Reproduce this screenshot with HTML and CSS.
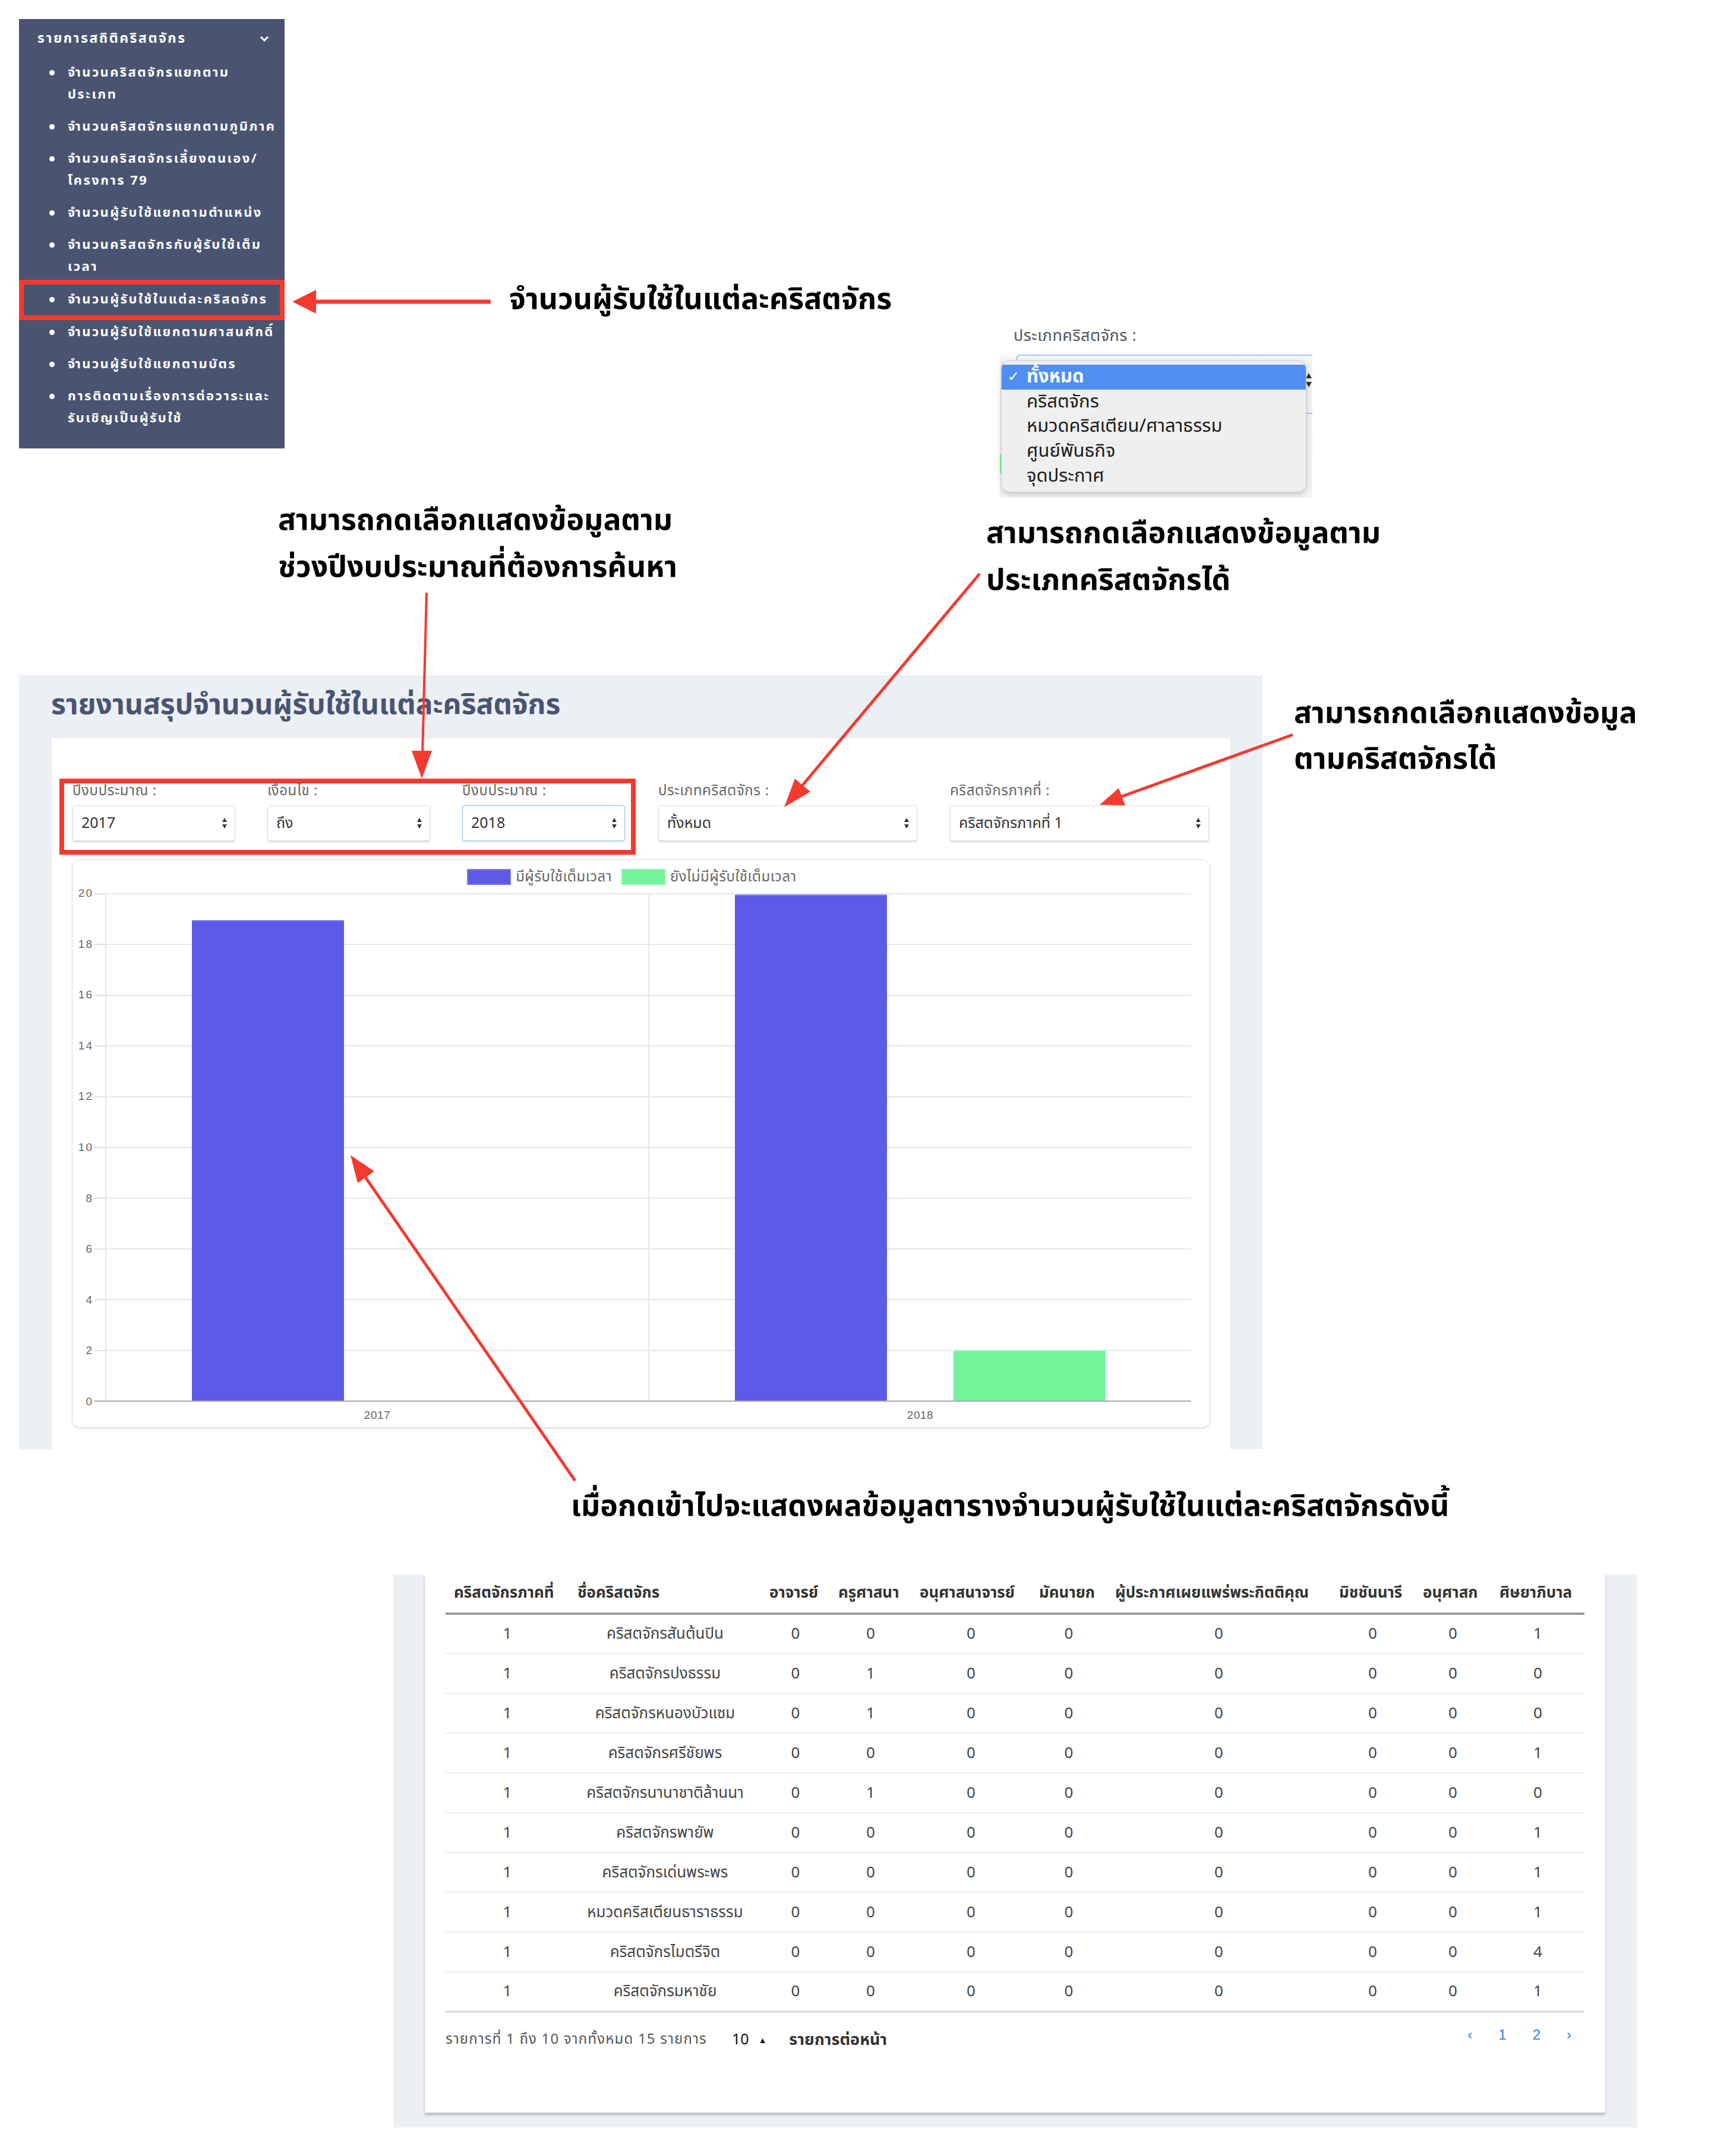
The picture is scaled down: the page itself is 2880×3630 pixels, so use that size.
FILE: index.html
```html
<!DOCTYPE html>
<html lang="th">
<head>
<meta charset="utf-8">
<title>รายงานสรุปจำนวนผู้รับใช้ในแต่ละคริสตจักร</title>
<link rel="stylesheet" href="styles.css">
</head>
<body>
<div class="page">

  <section class="row-top">
    <nav class="sidebar">
      <div class="side-title"><span>รายการสถิติคริสตจักร</span>
        <svg class="chev" width="16" height="10" viewBox="0 0 16 10"><path d="M2 2 L8 8 L14 2" fill="none" stroke="#fff" stroke-width="3"/></svg>
      </div>
      <ul class="side-list">
        <li>จำนวนคริสตจักรแยกตาม<br>ประเภท</li>
        <li>จำนวนคริสตจักรแยกตามภูมิภาค</li>
        <li>จำนวนคริสตจักรเลี้ยงตนเอง/<br>โครงการ 79</li>
        <li>จำนวนผู้รับใช้แยกตามตำแหน่ง</li>
        <li>จำนวนคริสตจักรกับผู้รับใช้เต็ม<br>เวลา</li>
        <li class="active">จำนวนผู้รับใช้ในแต่ละคริสตจักร</li>
        <li>จำนวนผู้รับใช้แยกตามศาสนศักดิ์</li>
        <li>จำนวนผู้รับใช้แยกตามบัตร</li>
        <li>การติดตามเรื่องการต่อวาระและ<br>รับเชิญเป็นผู้รับใช้</li>
      </ul>
    </nav>
    <p class="callout callout-side">จำนวนผู้รับใช้ในแต่ละคริสตจักร</p>
    <div class="dropshot">
      <div class="drop-label">ประเภทคริสตจักร :</div>
      <div class="ghost-select">
        <svg class="ghost-arrows" width="12" height="30" viewBox="0 0 12 30"><path d="M1 12 L6 3 L11 12 Z M1 18 L6 27 L11 18 Z" fill="#333"/></svg>
      </div>
      <div class="ghost-green"></div>
      <ul class="drop-menu">
        <li class="sel"><span class="tick">✓</span>ทั้งหมด</li>
        <li>คริสตจักร</li>
        <li>หมวดคริสเตียน/ศาลาธรรม</li>
        <li>ศูนย์พันธกิจ</li>
        <li>จุดประกาศ</li>
      </ul>
    </div>
  </section>

  <section class="row-notes">
    <p class="callout note-year">สามารถกดเลือกแสดงข้อมูลตาม<br>ช่วงปีงบประมาณที่ต้องการค้นหา</p>
    <p class="callout note-type">สามารถกดเลือกแสดงข้อมูลตาม<br>ประเภทคริสตจักรได้</p>
  </section>

  <section class="row-main">
    <div class="panel">
      <h1 class="panel-title">รายงานสรุปจำนวนผู้รับใช้ในแต่ละคริสตจักร</h1>
      <div class="card">
        <div class="filters">
          <div class="redbox">
            <div class="field f-small">
              <label>ปีงบประมาณ :</label>
              <div class="select"><span>2017</span><svg width="10" height="22" viewBox="0 0 10 22"><path d="M1 9 L5 2 L9 9 Z M1 13 L5 20 L9 13 Z" fill="#333"/></svg></div>
            </div>
            <div class="field f-small">
              <label>เงื่อนไข :</label>
              <div class="select"><span>ถึง</span><svg width="10" height="22" viewBox="0 0 10 22"><path d="M1 9 L5 2 L9 9 Z M1 13 L5 20 L9 13 Z" fill="#333"/></svg></div>
            </div>
            <div class="field f-small">
              <label>ปีงบประมาณ :</label>
              <div class="select focus"><span>2018</span><svg width="10" height="22" viewBox="0 0 10 22"><path d="M1 9 L5 2 L9 9 Z M1 13 L5 20 L9 13 Z" fill="#333"/></svg></div>
            </div>
          </div>
          <div class="field f-wide f-type">
            <label>ประเภทคริสตจักร :</label>
            <div class="select"><span>ทั้งหมด</span><svg width="10" height="22" viewBox="0 0 10 22"><path d="M1 9 L5 2 L9 9 Z M1 13 L5 20 L9 13 Z" fill="#333"/></svg></div>
          </div>
          <div class="field f-wide f-region">
            <label>คริสตจักรภาคที่ :</label>
            <div class="select"><span>คริสตจักรภาคที่ 1</span><svg width="10" height="22" viewBox="0 0 10 22"><path d="M1 9 L5 2 L9 9 Z M1 13 L5 20 L9 13 Z" fill="#333"/></svg></div>
          </div>
        </div>

        <div class="chart">
          <div class="legend">
            <span class="lg-box blue"></span><span class="lg-text">มีผู้รับใช้เต็มเวลา</span>
            <span class="lg-box green"></span><span class="lg-text">ยังไม่มีผู้รับใช้เต็มเวลา</span>
          </div>
          <div class="chart-body">
            <div class="yaxis">
              <span>20</span><span>18</span><span>16</span><span>14</span><span>12</span><span>10</span><span>8</span><span>6</span><span>4</span><span>2</span><span>0</span>
            </div>
            <div class="plot-wrap">
              <div class="plot">
                <div class="cat">
                  <div class="bar blue" style="height:95%"></div>
                  <div class="bar green" style="height:0%"></div>
                </div>
                <div class="cat">
                  <div class="bar blue" style="height:100%"></div>
                  <div class="bar green" style="height:10%"></div>
                </div>
              </div>
              <div class="xaxis">
                <span>2017</span><span>2018</span>
              </div>
            </div>
          </div>
        </div>
      </div>
    </div>
    <p class="callout note-church">สามารถกดเลือกแสดงข้อมูล<br>ตามคริสตจักรได้</p>
  </section>

  <p class="callout note-table">เมื่อกดเข้าไปจะแสดงผลข้อมูลตารางจำนวนผู้รับใช้ในแต่ละคริสตจักรดังนี้</p>

  <section class="row-table">
    <div class="tpanel">
      <div class="tcard">
        <table class="report">
          <colgroup>
            <col style="width:208px"><col style="width:323px"><col style="width:116px"><col style="width:137px"><col style="width:201px">
            <col style="width:128px"><col style="width:377px"><col style="width:141px"><col style="width:129px"><col style="width:157px">
          </colgroup>
          <thead>
            <tr>
              <th>คริสตจักรภาคที่</th><th>ชื่อคริสตจักร</th><th>อาจารย์</th><th>ครูศาสนา</th><th>อนุศาสนาจารย์</th>
              <th>มัคนายก</th><th>ผู้ประกาศเผยแพร่พระกิตติคุณ</th><th>มิชชันนารี</th><th>อนุศาสก</th><th>ศิษยาภิบาล</th>
            </tr>
          </thead>
          <tbody>
            <tr><td>1</td><td>คริสตจักรสันต้นปิน</td><td>0</td><td>0</td><td>0</td><td>0</td><td>0</td><td>0</td><td>0</td><td>1</td></tr>
            <tr><td>1</td><td>คริสตจักรปงธรรม</td><td>0</td><td>1</td><td>0</td><td>0</td><td>0</td><td>0</td><td>0</td><td>0</td></tr>
            <tr><td>1</td><td>คริสตจักรหนองบัวแซม</td><td>0</td><td>1</td><td>0</td><td>0</td><td>0</td><td>0</td><td>0</td><td>0</td></tr>
            <tr><td>1</td><td>คริสตจักรศรีชัยพร</td><td>0</td><td>0</td><td>0</td><td>0</td><td>0</td><td>0</td><td>0</td><td>1</td></tr>
            <tr><td>1</td><td>คริสตจักรนานาชาติล้านนา</td><td>0</td><td>1</td><td>0</td><td>0</td><td>0</td><td>0</td><td>0</td><td>0</td></tr>
            <tr><td>1</td><td>คริสตจักรพายัพ</td><td>0</td><td>0</td><td>0</td><td>0</td><td>0</td><td>0</td><td>0</td><td>1</td></tr>
            <tr><td>1</td><td>คริสตจักรเด่นพระพร</td><td>0</td><td>0</td><td>0</td><td>0</td><td>0</td><td>0</td><td>0</td><td>1</td></tr>
            <tr><td>1</td><td>หมวดคริสเตียนธาราธรรม</td><td>0</td><td>0</td><td>0</td><td>0</td><td>0</td><td>0</td><td>0</td><td>1</td></tr>
            <tr><td>1</td><td>คริสตจักรไมตรีจิต</td><td>0</td><td>0</td><td>0</td><td>0</td><td>0</td><td>0</td><td>0</td><td>4</td></tr>
            <tr><td>1</td><td>คริสตจักรมหาชัย</td><td>0</td><td>0</td><td>0</td><td>0</td><td>0</td><td>0</td><td>0</td><td>1</td></tr>
          </tbody>
        </table>
        <div class="tfoot">
          <div class="tinfo">
            <span class="count">รายการที่ 1 ถึง 10 จากทั้งหมด 15 รายการ</span>
            <span class="perpage">10 <small>▲</small></span>
            <span class="perlabel">รายการต่อหน้า</span>
          </div>
          <div class="pager"><span>‹</span><span>1</span><span>2</span><span>›</span></div>
        </div>
      </div>
    </div>
  </section>

  <svg class="arrows" width="2880" height="3630" viewBox="0 0 2880 3630">
    <g fill="#f43a2f" stroke="#f43a2f">
      <line x1="826" y1="508" x2="528" y2="508" stroke-width="7"/>
      <polygon points="492,508 532,488 532,528" stroke="none"/>
      <line x1="718" y1="998" x2="711" y2="1272" stroke-width="4"/>
      <polygon points="710,1311 693,1264 727,1264" stroke="none"/>
      <line x1="1649" y1="966" x2="1350" y2="1323" stroke-width="5"/>
      <polygon points="1320,1359 1364,1333 1338,1311" stroke="none"/>
      <line x1="2176" y1="1237" x2="1888" y2="1341" stroke-width="5"/>
      <polygon points="1851,1355 1894,1356 1883,1327" stroke="none"/>
      <line x1="968" y1="2493" x2="615" y2="1982" stroke-width="5"/>
      <polygon points="590,1945 630,1972 602,1992" stroke="none"/>
    </g>
  </svg>
</div>
</body>
</html>
```

FILE: styles.css
```css
* { box-sizing: border-box; }

body {
  margin: 0;
  background: #ffffff;
}

.page {
  position: relative;
  width: 2880px;
  height: 3630px;
  overflow: hidden;
  font-family: "Noto Sans Thai", "Noto Sans Thai UI", "Sarabun", "Garuda", "Loma", "Waree", "Norasi", "Noto Sans", "DejaVu Sans", sans-serif;
  color: #000;
}

/* ---------- top row ---------- */
.row-top {
  display: flex;
  align-items: flex-start;
  padding: 32px 0 0 32px;
  height: 755px;
}

.sidebar {
  width: 447px;
  height: 723px;
  flex: none;
  background: #4a5470;
  color: #fff;
  padding-top: 13px;
}

.side-title {
  display: flex;
  justify-content: space-between;
  align-items: center;
  height: 40px;
  padding: 0 26px 0 31px;
  font-size: 23px;
  font-weight: 700;
  letter-spacing: 2.5px;
  white-space: nowrap;
}

.side-list {
  list-style: none;
  margin: 19px 0 0 0;
  padding: 0;
}

.side-list li {
  display: grid;
  grid-template-columns: 31px 1fr;
  padding-left: 51px;
  margin-bottom: 17px;
  font-size: 22px;
  font-weight: 700;
  line-height: 37px;
  letter-spacing: 2.4px;
  white-space: nowrap;
}

.side-list li::before {
  content: "";
  width: 9px;
  height: 9px;
  margin-top: 14px;
  border-radius: 50%;
  background: #fff;
}

.side-list li.active {
  margin-top: -14px;
  margin-bottom: 2px;
  padding-top: 15px;
  padding-bottom: 16px;
  box-shadow: inset 0 0 0 8px #f43a2f;
}

.callout {
  margin: 0;
  font-size: 50px;
  font-weight: 700;
  line-height: 60px;
  white-space: nowrap;
  color: #000;
}

.callout-side {
  width: 826px;
  flex: none;
  margin-left: 378px;
  margin-top: 443px;
}

/* dropdown screenshot */
.dropshot {
  position: relative;
  flex: none;
  width: 526px;
  height: 289px;
  margin-top: 517px;
  background: linear-gradient(#ffffff 0, #ffffff 40px, #f1f1f1 62px, #f3f3f3 100%);
}

.drop-label {
  padding: 0 0 0 23px;
  height: 40px;
  font-size: 27px;
  line-height: 34px;
  color: #555;
  letter-spacing: 0.5px;
  white-space: nowrap;
}

.ghost-select {
  display: flex;
  justify-content: flex-end;
  align-items: flex-start;
  margin: 8px 0 0 27px;
  height: 100px;
  border: 2px solid #a8c6f2;
  border-right: none;
  border-radius: 8px 0 0 8px;
}

.ghost-arrows {
  margin-top: 26px;
}

.ghost-green {
  width: 5px;
  height: 32px;
  margin-top: 68px;
  background: #74f49a;
}

.drop-menu {
  position: absolute;
  left: 2px;
  top: 58px;
  width: 514px;
  height: 222px;
  margin: 0;
  padding: 6px 0 8px 0;
  list-style: none;
  background: #efefef;
  border: 1px solid #cfcfcf;
  border-radius: 14px;
  box-shadow: 0 3px 10px rgba(0, 0, 0, 0.18);
  overflow: hidden;
}

.drop-menu li {
  display: flex;
  align-items: center;
  height: 41.6px;
  padding-left: 42px;
  font-size: 31px;
  color: #1a1a1a;
  white-space: nowrap;
}

.drop-menu li.sel {
  background: #4f8ef2;
  color: #fff;
  font-weight: 700;
  padding-left: 10px;
}

.drop-menu .tick {
  width: 32px;
  font-size: 24px;
  font-weight: 400;
}

/* ---------- notes row ---------- */
.row-notes {
  display: flex;
  align-items: flex-start;
  height: 382px;
}

.note-year {
  width: 1192px;
  flex: none;
  margin-left: 468px;
  margin-top: 83px;
  line-height: 79px;
}

.note-type {
  margin-top: 105px;
  line-height: 79px;
}

/* ---------- main panel ---------- */
.row-main {
  display: flex;
  align-items: flex-start;
  padding-left: 32px;
}

.panel {
  width: 2093px;
  height: 1303px;
  flex: none;
  padding: 21px 53px 0 54px;
  background: #eceff4;
  display: flex;
  flex-direction: column;
}

.panel-title {
  margin: 0 0 24px 0;
  height: 60px;
  font-size: 48px;
  line-height: 60px;
  font-weight: 700;
  color: #4a5470;
  white-space: nowrap;
}

.card {
  flex: 1;
  background: #fff;
  border: 1px solid #e3e6ec;
  border-bottom: none;
  padding: 68px 0 0 13px;
}

.filters {
  display: flex;
  align-items: flex-start;
}

.redbox {
  display: flex;
  gap: 54px;
  width: 970px;
  height: 128px;
  padding: 1px 10px 0 14px;
  border: 8px solid #f43a2f;
}

.field label {
  display: block;
  height: 24px;
  line-height: 24px;
  font-size: 24px;
  letter-spacing: 0.6px;
  color: #666;
  white-space: nowrap;
}

.select {
  display: flex;
  align-items: center;
  justify-content: space-between;
  height: 60px;
  margin-top: 12px;
  padding: 0 12px 0 14px;
  background: #fff;
  border: 1px solid #dcdcdc;
  border-radius: 4px;
  box-shadow: 0 2px 2px rgba(0, 0, 0, 0.14);
  font-size: 25px;
  color: #333;
  white-space: nowrap;
}

.select.focus {
  border-color: #a9c8f0;
  box-shadow: 0 0 0 1px #d4e4f8, 0 2px 2px rgba(0, 0, 0, 0.12);
}

.f-small { width: 274px; }

.f-wide { width: 436px; padding-top: 9px; }

.f-type { margin-left: 38px; }

.f-region { margin-left: 55px; }

/* chart */
.chart {
  width: 1916px;
  height: 957px;
  margin: 8px 0 0 21px;
  padding: 15px 31px 0 0;
  border: 1px solid #dcdcdc;
  border-radius: 14px;
  box-shadow: 0 2px 3px rgba(0, 0, 0, 0.1);
}

.legend {
  display: flex;
  align-items: center;
  justify-content: center;
  height: 27px;
  padding-left: 0;
  font-size: 24px;
  letter-spacing: 0.5px;
  color: #666;
  white-space: nowrap;
}

.lg-box {
  width: 74px;
  height: 27px;
  margin-right: 8px;
}

.lg-box.green { margin-left: 16px; }

.lg-box.blue { background: #5c5ae6; border: 2px solid #7c7bf0; }
.lg-box.green { background: #74f49a; border: 2px solid #8ef7ad; }

.chart-body {
  display: flex;
  margin-top: 14px;
}

.yaxis {
  display: flex;
  flex-direction: column;
  justify-content: space-between;
  align-items: flex-end;
  width: 35px;
  height: 876px;
  margin-top: -10px;
  font-family: "Liberation Sans", Arial, sans-serif;
  font-size: 19px;
  letter-spacing: 2px;
  color: #666;
}

.yaxis span {
  height: 20px;
  line-height: 20px;
}

.plot-wrap {
  flex: 1;
  padding-left: 2px;
}

.plot {
  display: flex;
  height: 856px;
  padding-left: 18px;
  background:
    repeating-linear-gradient(to bottom, #e7e7e7 0, #e7e7e7 2px, transparent 2px, transparent 85.4px);
  background-clip: content-box;
  border-bottom: 2px solid #a9a9a9;
}

.plot::before {
  content: "";
  width: 18px;
  margin-left: -18px;
  background: repeating-linear-gradient(to bottom, #e0e0e0 0, #e0e0e0 2px, transparent 2px, transparent 85.4px);
}

.cat {
  flex: 1;
  display: flex;
  align-items: flex-end;
  justify-content: center;
  gap: 112px;
  border-left: 2px solid #e7e7e7;
  padding-top: 2px;
}

.bar {
  width: 256px;
}

.bar.blue { background: #5c5ae6; box-shadow: inset 0 2px 0 #8584f0; }
.bar.green { background: #74f49a; box-shadow: inset 0 2px 0 #9df8b8; }

.xaxis {
  display: flex;
  padding-left: 18px;
  height: 46px;
}

.xaxis span {
  flex: 1;
  display: flex;
  justify-content: center;
  align-items: center;
  border-left: 2px solid transparent;
  font-size: 19px;
  letter-spacing: 0.5px;
  color: #666;
  font-family: "Liberation Sans", Arial, sans-serif;
}

.note-church {
  margin-left: 53px;
  margin-top: 27px;
  line-height: 77px;
}

.note-table {
  margin: 67px 0 0 961px;
}

/* ---------- table panel ---------- */
.row-table {
  margin-top: 84px;
  padding-left: 662px;
}

.tpanel {
  width: 2094px;
  height: 931px;
  padding: 0 54px 25px 53px;
  background: #eceff4;
}

.tcard {
  height: 906px;
  background: #fff;
  padding: 0 35px 0 35px;
  box-shadow: 0 4px 4px rgba(0, 0, 0, 0.22);
}

.report {
  width: 1917px;
  border-collapse: collapse;
  table-layout: fixed;
}

.report th {
  height: 66px;
  padding: 0 14px 3px 14px;
  text-align: left;
  font-size: 26px;
  font-weight: 700;
  color: #333;
  border-bottom: 4px solid #9b9b9b;
  white-space: nowrap;
  overflow: visible;
}

.report td {
  height: 67px;
  padding: 0;
  text-align: center;
  font-size: 26px;
  color: #444;
  border-bottom: 2px solid #ececec;
  white-space: nowrap;
}

.report tbody tr:last-child td {
  border-bottom: 4px solid #dedede;
}

.tfoot {
  display: flex;
  justify-content: space-between;
  align-items: flex-start;
  padding-top: 22px;
}

.tinfo {
  display: flex;
  align-items: center;
  height: 46px;
  white-space: nowrap;
}

.count {
  font-size: 24px;
  letter-spacing: 1.2px;
  color: #555;
}

.perpage {
  margin-left: 42px;
  font-size: 25px;
  color: #111;
}

.perpage small {
  font-size: 14px;
  margin-left: 12px;
  vertical-align: middle;
}

.perlabel {
  margin-left: 40px;
  font-size: 27px;
  font-weight: 700;
  color: #333;
}

.pager {
  display: flex;
  gap: 44px;
  height: 30px;
  padding-right: 22px;
  align-items: center;
  font-size: 24px;
  color: #2b7de9;
  font-family: "Liberation Sans", Arial, sans-serif;
}

/* ---------- annotation arrows ---------- */
.arrows {
  position: absolute;
  left: 0;
  top: 0;
  pointer-events: none;
}
```
